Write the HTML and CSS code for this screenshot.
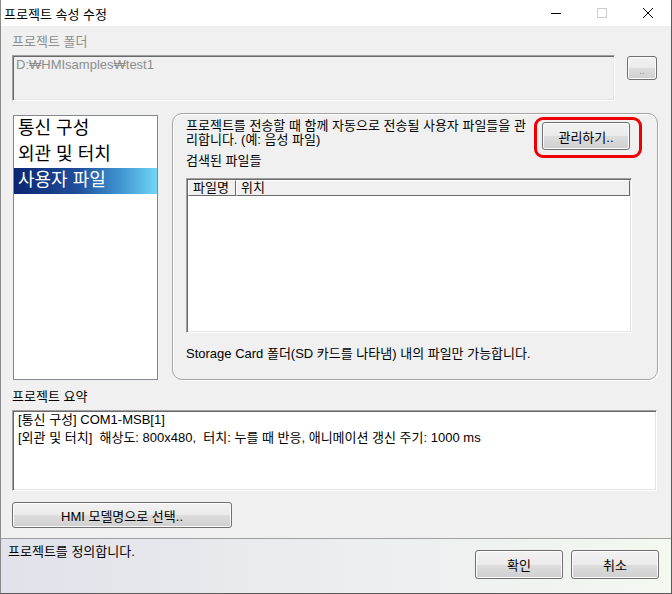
FILE: index.html
```html
<!DOCTYPE html>
<html lang="ko">
<head>
    <meta charset="UTF-8">
    <title>프로젝트 속성 수정</title>
    <link rel="stylesheet" href="styles.css">
</head>
<body>
    <div class="window">
        <div class="titlebar">
            <span class="title">프로젝트 속성 수정</span>
            <div class="controls">
                <span class="ctl">
                    <svg width="12" height="12" viewBox="0 0 12 12"><path d="M1 6.5h10" stroke="#000" stroke-width="1"/></svg>
                </span>
                <span class="ctl">
                    <svg width="12" height="12" viewBox="0 0 12 12"><rect x="1.5" y="1.5" width="9" height="9" fill="none" stroke="#cccccc"/></svg>
                </span>
                <span class="ctl">
                    <svg width="12" height="12" viewBox="0 0 12 12"><path d="M1 1l10 10M11 1L1 11" stroke="#000" stroke-width="1"/></svg>
                </span>
            </div>
        </div>

        <div class="content">
            <div class="field-label disabled">프로젝트 폴더</div>
            <div class="folder-row">
                <div class="textbox disabled">D:₩HMIsamples₩test1</div>
                <button class="btn dots">..</button>
            </div>

            <div class="main-row">
                <ul class="nav">
                    <li>통신 구성</li>
                    <li>외관 및 터치</li>
                    <li class="selected">사용자 파일</li>
                </ul>

                <div class="group">
                    <div class="group-top">
                        <div class="group-text">
                            <p class="desc">프로젝트를 전송할 때 함께 자동으로 전송될 사용자 파일들을 관<br>리합니다. (예: 음성 파일)</p>
                            <div class="found">검색된 파일들</div>
                        </div>
                        <div class="highlight">
                            <button class="btn manage">관리하기..</button>
                        </div>
                    </div>
                    <div class="filelist">
                        <div class="list-head">
                            <span class="col name">파일명</span>
                            <span class="col loc">위치</span>
                        </div>
                    </div>
                    <div class="note">Storage Card 폴더(SD 카드를 나타냄) 내의 파일만 가능합니다.</div>
                </div>
            </div>

            <div class="field-label summary-label">프로젝트 요약</div>
            <div class="summary">
                <div>[통신 구성] COM1-MSB[1]</div>
                <div>[외관 및 터치]&nbsp; 해상도: 800x480,&nbsp; 터치: 누를 때 반응, 애니메이션 갱신 주기: 1000 ms</div>
            </div>

            <button class="btn model">HMI 모델명으로 선택..</button>
        </div>

        <div class="statusbar">
            <span class="status-text">프로젝트를 정의합니다.</span>
            <div class="actions">
                <button class="btn action">확인</button>
                <button class="btn action">취소</button>
            </div>
        </div>
    </div>
</body>
</html>
```

FILE: styles.css
```css
* {
    box-sizing: border-box;
}
body {
    margin: 0;
    font-family: "Liberation Sans", "Noto Sans CJK KR", sans-serif;
    font-size: 13px;
    color: #000;
    background: #f0f0f0;
}
.window {
    width: 672px;
    height: 594px;
    display: flex;
    flex-direction: column;
    border-left: 1px solid #8a8a8a;
    border-right: 1px solid #5a5a5a;
    border-bottom: 1px solid #5a5a5a;
    background: #f0f0f0;
    overflow: hidden;
}

/* title bar */
.titlebar {
    height: 26px;
    background: #fff;
    display: flex;
    align-items: center;
    justify-content: space-between;
}
.title {
    padding-left: 3px;
}
.controls {
    display: flex;
    height: 100%;
}
.ctl {
    width: 46px;
    display: flex;
    align-items: center;
    justify-content: center;
}

.content {
    flex: 1;
    padding: 0 14px 0 11px;
    display: flex;
    flex-direction: column;
}
.field-label {
    margin-top: 8px;
    line-height: 15px;
}
.disabled {
    color: #8d8d8d;
}

.folder-row {
    display: flex;
    gap: 12px;
    margin-top: 6px;
}
.textbox {
    flex: 1;
    height: 46px;
    padding: 1px 3px;
    line-height: 15px;
    border: 1px solid;
    border-color: #a0a0a0 #fff #fff #a0a0a0;
    box-shadow: inset 1px 1px #696969, inset -1px -1px #e3e3e3;
}

/* push buttons */
.btn {
    font-family: inherit;
    font-size: 13px;
    color: #000;
    border: 1px solid #707070;
    border-radius: 3px;
    background: linear-gradient(#f2f2f2 0%, #ebebeb 50%, #dddddd 51%, #cfcfcf 100%);
    box-shadow: inset 0 0 0 1px #fcfcfc;
    padding: 0;
}
.dots {
    width: 30px;
    height: 24px;
    margin-top: 1px;
    color: #8d8d8d;
    font-size: 10px;
    padding-top: 4px;
}

.main-row {
    display: flex;
    margin-top: 12px;
    height: 267px;
}
.nav {
    list-style: none;
    margin: 2px 0 0 1px;
    padding: 0;
    width: 145px;
    height: 265px;
    background: #fff;
    border: 1px solid #828790;
}
.nav li {
    height: 26px;
    line-height: 25px;
    padding-left: 4px;
    font-size: 18px;
}
.nav li.selected {
    color: #fff;
    background: linear-gradient(90deg, #0b2670 0%, #1f4f9c 45%, #3f96d2 75%, #72d6f6 100%);
}

/* group panel */
.group {
    flex: 1;
    margin: 0 -1px 0 14px;
    border: 1px solid #a5a5a5;
    border-radius: 10px;
    box-shadow: inset 1px 1px #fff, 1px 1px #fff;
    padding: 3px 15px 0 13px;
    display: flex;
    flex-direction: column;
}
.group-top {
    display: flex;
    justify-content: space-between;
    align-items: flex-start;
}
.group-text {
    margin-top: 2px;
}
.desc {
    margin: 0;
    line-height: 14px;
    white-space: nowrap;
}
.found {
    margin-top: 7px;
    line-height: 13px;
}
.highlight {
    border: 3px solid #ee0000;
    border-radius: 9px;
    padding: 2px 9px 5px 5px;
}
.manage {
    width: 88px;
    height: 28px;
}
.filelist {
    margin-top: 11px;
    margin-right: 10px;
    height: 155px;
    background: #fff;
    border: 1px solid;
    border-color: #a0a0a0 #fff #fff #a0a0a0;
    box-shadow: inset 1px 1px #696969, inset -1px -1px #e3e3e3;
    padding: 1px;
}
.list-head {
    display: flex;
    height: 16px;
    background: #f0f0f0;
}
.col {
    line-height: 14px;
    padding-left: 4px;
    border: 1px solid;
    border-color: #fff #696969 #696969 #fff;
}
.col.name {
    width: 48px;
}
.col.loc {
    flex: 1;
}
.note {
    margin-top: 14px;
    line-height: 13px;
}

.summary-label {
    margin-top: 9px;
}
.summary {
    margin-top: 6px;
    height: 81px;
    background: #fff;
    padding: 0 5px;
    line-height: 18px;
    border: 1px solid;
    border-color: #a0a0a0 #fff #fff #a0a0a0;
    box-shadow: inset 1px 1px #696969, inset -1px -1px #e3e3e3;
}
.model {
    margin-top: 11px;
    width: 220px;
    height: 26px;
    align-self: flex-start;
}

/* bottom status strip */
.statusbar {
    height: 55px;
    border-top: 1px solid #a0a0a0;
    background: linear-gradient(90deg, #e1e2ea 0%, #eceef0 55%, #f3f8f0 100%);
    display: flex;
    justify-content: space-between;
    align-items: flex-start;
    padding: 6px 12px 0 7px;
}
.status-text {
    line-height: 13px;
}
.actions {
    display: flex;
    gap: 8px;
    margin-top: 5px;
}
.action {
    width: 88px;
    height: 29px;
}
```
